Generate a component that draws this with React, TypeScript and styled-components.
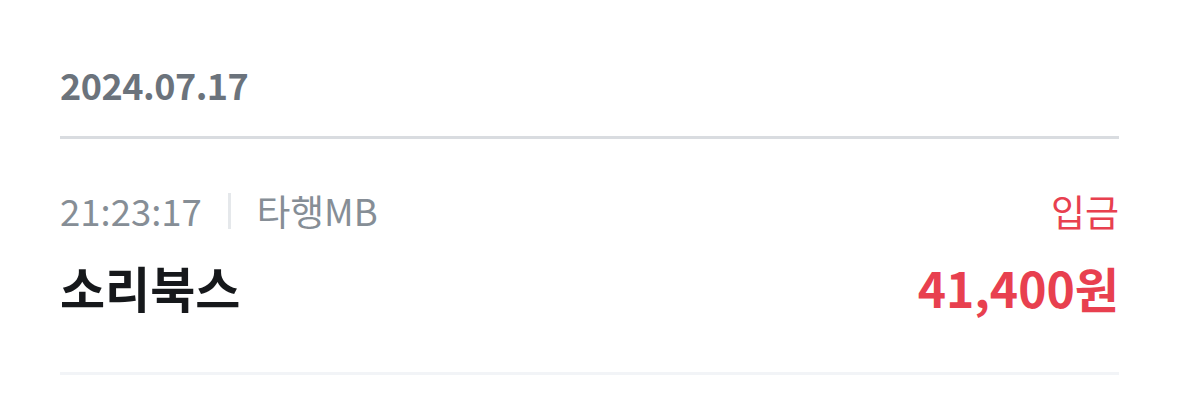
import styled, { createGlobalStyle } from 'styled-components';

type Transaction = {
	time: string;
	bank: string;
	name: string;
	type: string;
	amount: string;
};

const transactions: Transaction[] = [
	{
		time: '21:23:17',
		bank: '타행MB',
		name: '소리북스',
		type: '입금',
		amount: '41,400원',
	},
];

const App = () => {
	return (
		<>
			<GlobalStyle />
			<Page>
				<DateHeader>2024.07.17</DateHeader>
				<List>
					{transactions.map(tx => (
						<Item key={tx.time}>
							<MetaRow>
								<Meta>
									<MetaText>{tx.time}</MetaText>
									<Separator />
									<MetaText>{tx.bank}</MetaText>
								</Meta>
								<TypeLabel>{tx.type}</TypeLabel>
							</MetaRow>
							<MainRow>
								<Name>{tx.name}</Name>
								<Amount>{tx.amount}</Amount>
							</MainRow>
						</Item>
					))}
				</List>
			</Page>
		</>
	);
};

const GlobalStyle = createGlobalStyle`
	body {
		margin: 0;
		background: #ffffff;
		font-family: 'Noto Sans CJK KR', 'Noto Sans', sans-serif;
	}
`;

const Page = styled.div`
	padding: 0 60px;
`;

const DateHeader = styled.div`
	padding-top: 58px;
	padding-bottom: 26px;
	border-bottom: 3px solid #d9dce0;
	font-size: 36px;
	font-weight: 700;
	line-height: 52px;
	color: #6b737c;
	letter-spacing: -0.5px;
`;

const List = styled.div`
	display: flex;
	flex-direction: column;
`;

const Item = styled.div`
	padding: 50px 0 57px;
	border-bottom: 3px solid #f2f4f7;
	display: flex;
	flex-direction: column;
	gap: 26px;
`;

const Row = styled.div`
	display: flex;
	align-items: center;
	justify-content: space-between;
`;

const MetaRow = styled(Row)``;

const MainRow = styled(Row)``;

const Meta = styled.div`
	display: flex;
	align-items: center;
	gap: 26px;
`;

const MetaText = styled.span`
	font-size: 36.5px;
	line-height: 44px;
	color: #868e96;
`;

const Separator = styled.span`
	width: 3px;
	height: 36px;
	background: #e5e8eb;
`;

const TypeLabel = styled.span`
	font-size: 37px;
	line-height: 44px;
	color: #e8404f;
`;

const Name = styled.span`
	font-size: 49px;
	font-weight: 700;
	line-height: 56px;
	color: #16181b;
`;

const Amount = styled.span`
	font-size: 48px;
	font-weight: 700;
	line-height: 56px;
	color: #e8404f;
`;

export default App;
